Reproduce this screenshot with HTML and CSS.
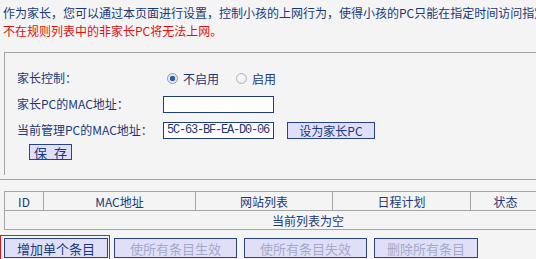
FILE: index.html
```html
<!DOCTYPE html>
<html lang="zh-CN">
<head>
<meta charset="utf-8">
<title>家长控制</title>
<link rel="stylesheet" href="styles.css">
</head>
<body>
<div class="page">
  <div class="intro">
    <p class="note">作为家长，您可以通过本页面进行设置，控制小孩的上网行为，使得小孩的PC只能在指定时间访问指定</p>
    <p class="warn">不在规则列表中的非家长PC将无法上网。</p>
  </div>
  <div class="box">
    <div class="form">
      <div class="label">家长控制：</div>
      <div class="ctrl radios">
        <label class="radio"><span class="dot on"></span>不启用</label>
        <label class="radio"><span class="dot"></span>启用</label>
      </div>
      <div class="label">家长PC的MAC地址：</div>
      <div class="ctrl"><span class="input"></span></div>
      <div class="label">当前管理PC的MAC地址：</div>
      <div class="ctrl"><span class="input mac">5C-63-BF-EA-D0-06</span><span class="btn set">设为家长PC</span></div>
    </div>
    <div class="saverow"><span class="btn save">保 存</span></div>
  </div>
  <div class="rule"></div>
  <table class="list">
    <tr class="head">
      <td class="c1">ID</td><td class="c2">MAC地址</td><td class="c3">网站列表</td><td class="c4">日程计划</td><td class="c5">状态</td><td class="c6"></td>
    </tr>
    <tr><td colspan="6" class="empty">当前列表为空</td></tr>
  </table>
  <div class="actions">
    <div class="mark"><span class="btn act w1">增加单个条目</span></div>
    <span class="btn act w2 off">使所有条目生效</span>
    <span class="btn act w2 off">使所有条目失效</span>
    <span class="btn act w1 off">删除所有条目</span>
  </div>
</div>
</body>
</html>
```
FILE: styles.css
```css
html, body {
  margin: 0;
  padding: 0;
  background: #f4f4f4;
  overflow: hidden;
}
body {
  font-family: "Noto Sans CJK SC", "Noto Sans", sans-serif;
  font-size: 12px;
  color: #1a3878;
}
.page {
  width: 640px;
}
.intro {
  padding: 4px 0 0 3px;
  height: 48px;
}
.intro p {
  margin: 0;
  line-height: 18px;
  white-space: nowrap;
}
.warn {
  color: #e01010;
}
.box {
  margin-left: 4px;
  border-top: 1px solid #a4a4a4;
  border-left: 1px solid #a4a4a4;
  padding: 12px 0 6px 12px;
  height: 104px;
}
.form {
  display: grid;
  grid-template-columns: 146px auto;
  grid-auto-rows: 26px;
  align-items: center;
}
.label {
  line-height: 16px;
}
.ctrl {
  display: flex;
  align-items: center;
}
.radios {
  padding-left: 4px;
}
.radio {
  display: flex;
  align-items: center;
  gap: 5px;
  margin-right: 17px;
}
.dot {
  width: 11px;
  height: 11px;
  border-radius: 50%;
  border: 1px solid #b4b4b4;
  box-sizing: border-box;
  background: radial-gradient(circle at 40% 40%, #ffffff 0%, #e2e2e2 100%);
}
.dot.on {
  border-color: #8a98b8;
  background: radial-gradient(circle, #2a5fb0 0, #2a5fb0 2.5px, #dfe6f2 3px, #f4f6fa 100%);
}
.input {
  display: block;
  width: 111px;
  height: 17px;
  box-sizing: border-box;
  border: 1px solid #1e3c7e;
  background: #ffffff;
}
.mac {
  font-family: "Liberation Mono", "DejaVu Sans Mono", monospace;
  font-size: 12px;
  letter-spacing: -1.2px;
  line-height: 15px;
  padding-left: 3px;
  color: #1a3878;
  white-space: nowrap;
}
.btn {
  display: flex;
  align-items: center;
  justify-content: center;
  box-sizing: border-box;
  border: 1px solid #2a428a;
  background: #dfe0f8;
  color: #1a3878;
  height: 17px;
  white-space: pre;
}
.set {
  width: 88px;
  margin-left: 13px;
}
.saverow {
  display: flex;
  padding: 1px 0 0 12px;
}
.save {
  width: 43px;
  height: 16px;
  font-size: 13px;
  letter-spacing: 2px;
  padding-left: 2px;
}
.rule {
  border-top: 1px solid #a4a4a4;
  margin-top: 4px;
}
.list {
  margin: 11px 0 0 4px;
  border-collapse: collapse;
  width: 608px;
  table-layout: fixed;
}
.list td {
  border: 1px solid #a4a4a4;
  height: 18px;
  padding: 0;
  text-align: center;
  font-size: 12px;
}
.c1 { width: 38px; }
.c2 { width: 151px; }
.c3 { width: 136px; }
.c4 { width: 137px; }
.c5 { width: 69px; }
.empty {
  color: #1a3878;
}
.actions {
  display: flex;
  align-items: flex-start;
  margin-top: 5px;
}
.mark {
  border: 1px solid #e01818;
  border-bottom: none;
  padding: 2px 1px 4px 3px;
  margin-right: 4px;
}
.act {
  height: 20px;
  font-size: 13px;
  margin-top: 3px;
}
.mark .act {
  margin-top: 0;
}
.actions > .act {
  margin-right: 7px;
}
.w1 { width: 104px; }
.w2 { width: 123px; }
.off {
  color: #a6a8c8;
}
```
